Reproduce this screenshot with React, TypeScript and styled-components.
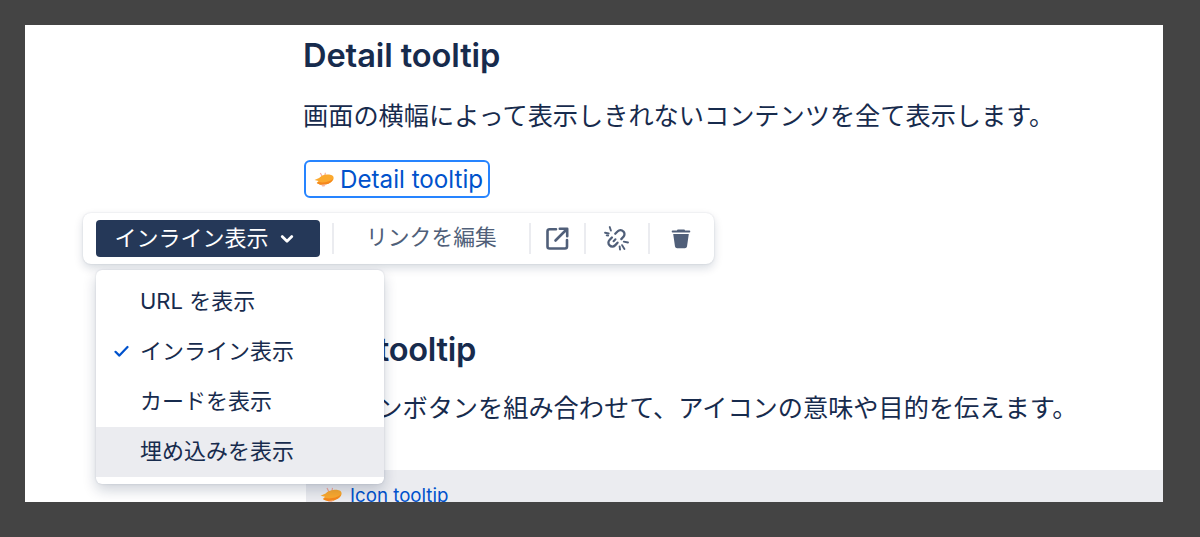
import React from "react";
import styled, { createGlobalStyle } from "styled-components";

const FONT = `Inter, "Noto Sans CJK JP", "Noto Sans", sans-serif`;

const Global = createGlobalStyle`
  html, body { margin: 0; padding: 0; background: #444444; height: 100%; }
  body { font-family: ${FONT}; overflow: hidden; }
`;

const Sheet = styled.main`
  position: relative;
  box-sizing: border-box;
  width: 1138px;
  height: 477px;
  margin: 25px 0 0 25px;
  padding: 0 0 0 278px;
  background: #fff;
  overflow: hidden;
  color: #172b4d;
`;

const Heading = styled.h2`
  margin: 0;
  font-size: 32.6px;
  line-height: 60px;
  font-weight: 600;
  letter-spacing: -0.1px;
  color: #172b4d;
`;

const LowerHeading = styled(Heading)`
  margin-top: -1px;
  letter-spacing: -0.25px;
`;

const Paragraph = styled.p<{ $top: number }>`
  margin: ${(p) => p.$top}px 0 0;
  font-size: 25.2px;
  line-height: 40px;
  white-space: nowrap;
  color: #172b4d;
`;

const DetailSection = styled.section`
  height: 215px;
  box-sizing: border-box;
`;

const InlineCard = styled.a`
  display: inline-flex;
  align-items: center;
  gap: 6px;
  box-sizing: border-box;
  height: 38px;
  margin: 24px 0 0 1px;
  padding: 0 5px 0 8px;
  border: 2px solid #2684ff;
  border-radius: 6px;
  font-size: 24.2px;
  color: #0052cc;
`;

const IconSection = styled.section`
  padding-top: 80px;
`;

const CodeStrip = styled.div`
  display: flex;
  align-items: center;
  gap: 8px;
  box-sizing: border-box;
  height: 50px;
  margin: 42px 0 0 3px;
  padding: 0 0 0 14px;
  background: #ebecf0;
`;

const CodeLink = styled.a`
  font-size: 18.7px;
  color: #0052cc;
  text-decoration: underline;
`;

const Toolbar = styled.div`
  position: absolute;
  left: 58px;
  top: 188px;
  box-sizing: border-box;
  width: 631px;
  height: 51px;
  display: flex;
  align-items: center;
  padding: 0 13px;
  background: #fff;
  border-radius: 8px;
  box-shadow: 0 4px 10px rgba(9, 30, 66, 0.16), 0 0 2px rgba(9, 30, 66, 0.14);
`;

const ModeButton = styled.button`
  display: flex;
  align-items: center;
  justify-content: center;
  gap: 11px;
  box-sizing: border-box;
  width: 224px;
  height: 37px;
  flex: none;
  padding: 0 8px 0 0;
  border: 0;
  border-radius: 4px;
  background: #253858;
  color: #fff;
  font-family: ${FONT};
  font-size: 22px;
`;

const ButtonLabel = styled.span`
  display: block;
  line-height: 30px;
  padding-bottom: 2px;
`;

const Divider = styled.span<{ $gap: number }>`
  width: 2px;
  height: 31px;
  flex: none;
  margin-left: ${(p) => p.$gap}px;
  background: #ebecf0;
`;

const EditLink = styled.span`
  flex: none;
  width: 130px;
  margin-left: 32px;
  padding-bottom: 4px;
  font-size: 21.8px;
  line-height: 30px;
  color: #505f79;
  white-space: nowrap;
`;

const IconSlot = styled.span<{ $gap: number }>`
  display: flex;
  flex: none;
  margin-left: ${(p) => p.$gap}px;
`;

const Menu = styled.ul`
  position: absolute;
  left: 71px;
  top: 245px;
  box-sizing: border-box;
  width: 288px;
  height: 214px;
  margin: 0;
  padding: 7px 0;
  list-style: none;
  background: #fff;
  border-radius: 6px;
  overflow: hidden;
  box-shadow: 0 6px 14px rgba(9, 30, 66, 0.2), 0 0 2px rgba(9, 30, 66, 0.16);
`;

const MenuItem = styled.li<{ $hover?: boolean }>`
  position: relative;
  display: flex;
  align-items: center;
  box-sizing: border-box;
  height: 50px;
  padding: 0 0 6px 44px;
  font-size: 22px;
  color: #172b4d;
  background: ${(p) => (p.$hover ? "#ebecf0" : "transparent")};
`;

const CheckMark = styled.svg`
  position: absolute;
  left: 18px;
  top: 18px;
`;

const Blimp = ({ size = 22 }: { size?: number }) => (
  <svg width={size} height={size * 0.75} viewBox="0 0 22 16.5" style={{ flex: "none" }}>
    <path d="M9 5 L7 1 M12 4 L12.5 0.8" stroke="#f4a79a" strokeWidth="1.2" fill="none" />
    <path d="M21.6 6.5 C21.6 3.5 18 2.6 14.5 2.8 C10.5 3 7.5 4.5 5.6 6.6 L0.6 8.8 L5 9.8 L3 12 C6 14 9 14.3 12 13.8 C17 13 21.6 10 21.6 6.5Z" fill="#fba92e" />
    <path d="M5 11 C10 12.2 17 11 21 7.6 C20 11 16 13.2 12 13.8 C9 14.3 6 14 3 12Z" fill="#f5871d" />
    <path d="M8 14 L13 13.6 L11.5 16 L9 16 Z" fill="#f6b9a8" />
  </svg>
);

const Chevron = () => (
  <svg width="14" height="10" viewBox="0 0 14 10" fill="none">
    <path d="M2.2 2.6 L7 7.2 L11.8 2.6" stroke="#fff" strokeWidth="2.8" strokeLinecap="round" strokeLinejoin="round" />
  </svg>
);

const ExternalIcon = () => (
  <svg width="23" height="23" viewBox="0 0 23 23" fill="none" stroke="#505f79" strokeWidth="2.6" strokeLinecap="round" strokeLinejoin="round">
    <path d="M10 2.2 H3.5 A2 2 0 0 0 1.5 4.2 V19.5 A2 2 0 0 0 3.5 21.5 H19 A2 2 0 0 0 21 19.5 V13" />
    <path d="M9.5 13.5 L20.5 2.5 M13.8 1.8 H21.2 V9.2" />
  </svg>
);

const UnlinkIcon = () => (
  <svg width="25" height="25" viewBox="0 0 24 24" fill="none" stroke="#505f79" strokeLinecap="round">
    <path d="M10.8 7.5 L13.2 5.1 A3.6 3.6 0 0 1 18.5 5.2 A3.6 3.6 0 0 1 18.6 10.4 L16.6 12.6" strokeWidth="2.2" />
    <path d="M13 16 L10.6 18.6 A3.6 3.6 0 0 1 5.4 18.6 A3.6 3.6 0 0 1 5.3 13.4 L7.6 11" strokeWidth="2.2" />
    <path d="M9.2 14.6 L11 12.8" strokeWidth="2" />
    <path d="M1 6.5 L4.5 7.2 M5.5 1 L6.6 4.4 M19 15 L23 15.8 M17.4 18.4 L19.6 22 M15 19.6 L15.4 22.6 M2.6 9 L4 9.2" strokeWidth="1.8" />
  </svg>
);

const TrashIcon = () => (
  <svg width="20" height="21" viewBox="0 0 20 21">
    <path d="M7 1.6 H13 A1 1 0 0 1 14 2.6 H18.4 A0.9 0.9 0 0 1 18.4 4.4 H1.6 A0.9 0.9 0 0 1 1.6 2.6 H6 A1 1 0 0 1 7 1.6Z" fill="#505f79" />
    <path d="M2.2 6 H17.8 L16 18.4 A2.2 2.2 0 0 1 13.8 20.2 H6.2 A2.2 2.2 0 0 1 4 18.4 Z" fill="#505f79" />
  </svg>
);

export default function App() {
  return (
    <>
      <Global />
      <Sheet>
        <DetailSection>
          <Heading>Detail tooltip</Heading>
          <Paragraph $top={11}>画面の横幅によって表示しきれないコンテンツを全て表示します。</Paragraph>
          <InlineCard>
            <Blimp size={20} />
            Detail tooltip
          </InlineCard>
        </DetailSection>
        <IconSection>
          <LowerHeading>Icon tooltip</LowerHeading>
          <Paragraph $top={9}>アイコンボタンを組み合わせて、アイコンの意味や目的を伝えます。</Paragraph>
          <CodeStrip>
            <Blimp />
            <CodeLink>Icon tooltip</CodeLink>
          </CodeStrip>
        </IconSection>

        <Toolbar>
          <ModeButton>
            <ButtonLabel>インライン表示</ButtonLabel>
            <Chevron />
          </ModeButton>
          <Divider $gap={12} />
          <EditLink>リンクを編集</EditLink>
          <Divider $gap={33} />
          <IconSlot $gap={15}>
            <ExternalIcon />
          </IconSlot>
          <Divider $gap={15} />
          <IconSlot $gap={18}>
            <UnlinkIcon />
          </IconSlot>
          <Divider $gap={19} />
          <IconSlot $gap={21}>
            <TrashIcon />
          </IconSlot>
        </Toolbar>

        <Menu>
          <MenuItem>URL を表示</MenuItem>
          <MenuItem>
            <CheckMark width="15" height="13" viewBox="0 0 15 13" fill="none">
              <path d="M1.5 6.8 L5.4 10.6 L13.5 2" stroke="#0052cc" strokeWidth="2.2" strokeLinecap="round" strokeLinejoin="round" />
            </CheckMark>
            インライン表示
          </MenuItem>
          <MenuItem>カードを表示</MenuItem>
          <MenuItem $hover>埋め込みを表示</MenuItem>
        </Menu>
      </Sheet>
    </>
  );
}
